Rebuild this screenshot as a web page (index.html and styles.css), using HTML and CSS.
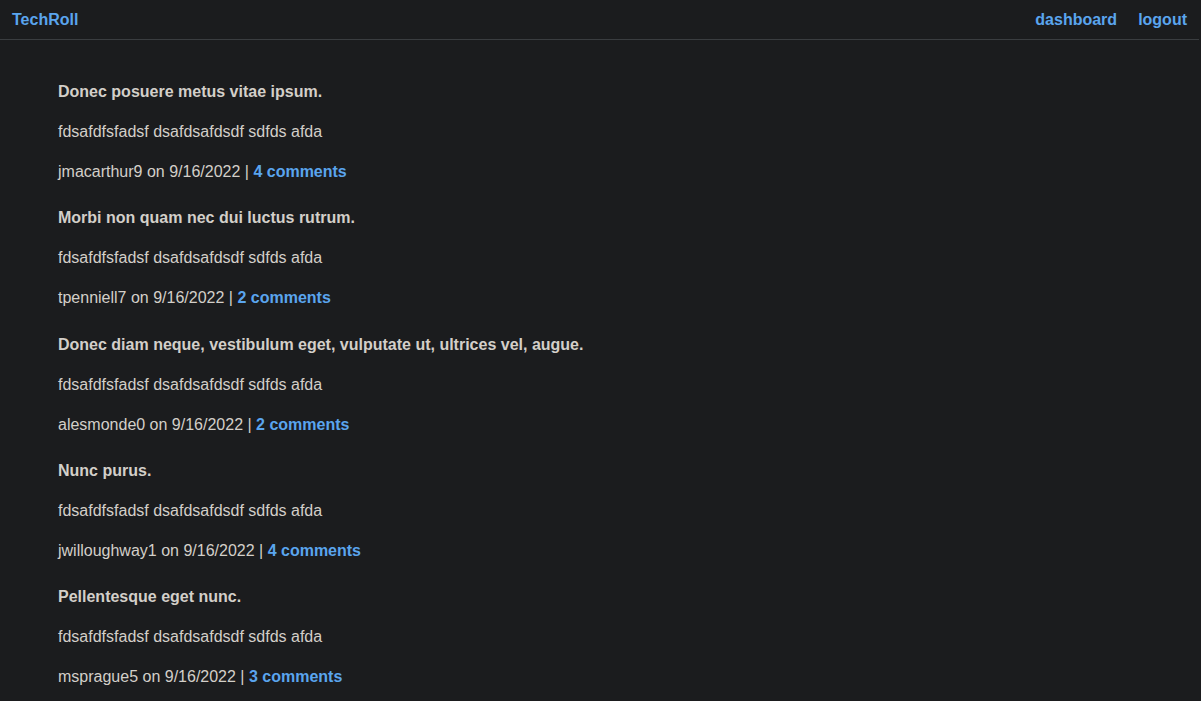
FILE: index.html
```html
<!DOCTYPE html>
<html>
<head>
<meta charset="utf-8">
<link rel="stylesheet" href="styles.css">
</head>
<body>
<header class="topbar">
  <a class="brand" href="#">TechRoll</a>
  <nav class="nav">
    <a href="#">dashboard</a>
    <a href="#">logout</a>
  </nav>
</header>
<main class="posts">
  <article class="post">
    <p class="title">Donec posuere metus vitae ipsum.</p>
    <p>fdsafdfsfadsf dsafdsafdsdf sdfds afda</p>
    <p>jmacarthur9 on 9/16/2022 | <a href="#">4 comments</a></p>
  </article>
  <article class="post">
    <p class="title">Morbi non quam nec dui luctus rutrum.</p>
    <p>fdsafdfsfadsf dsafdsafdsdf sdfds afda</p>
    <p>tpenniell7 on 9/16/2022 | <a href="#">2 comments</a></p>
  </article>
  <article class="post">
    <p class="title">Donec diam neque, vestibulum eget, vulputate ut, ultrices vel, augue.</p>
    <p>fdsafdfsfadsf dsafdsafdsdf sdfds afda</p>
    <p>alesmonde0 on 9/16/2022 | <a href="#">2 comments</a></p>
  </article>
  <article class="post">
    <p class="title">Nunc purus.</p>
    <p>fdsafdfsfadsf dsafdsafdsdf sdfds afda</p>
    <p>jwilloughway1 on 9/16/2022 | <a href="#">4 comments</a></p>
  </article>
  <article class="post">
    <p class="title">Pellentesque eget nunc.</p>
    <p>fdsafdfsfadsf dsafdsafdsdf sdfds afda</p>
    <p>msprague5 on 9/16/2022 | <a href="#">3 comments</a></p>
  </article>
</main>
</body>
</html>
```
FILE: styles.css
```css
html, body {
  margin: 0;
  padding: 0;
  background: #1b1c1e;
  color: #d3cfc9;
  font-family: "Liberation Sans", Arial, sans-serif;
  font-size: 16px;
}
a {
  color: #5aa5ee;
  font-weight: bold;
  text-decoration: none;
}
.topbar {
  display: flex;
  justify-content: space-between;
  align-items: center;
  height: 39px;
  border-bottom: 1px solid #3a3d40;
  padding: 0 12px 0 12px;
  margin-right: 2px;
}
.nav {
  display: flex;
  gap: 21px;
}
.posts {
  display: flex;
  flex-direction: column;
  gap: 22.33px;
  padding: 40px 0 0 58px;
}
.post {
  display: flex;
  flex-direction: column;
  gap: 16px;
}
.post p {
  margin: 0;
  line-height: 24px;
}
.post .title {
  font-weight: bold;
}
```
